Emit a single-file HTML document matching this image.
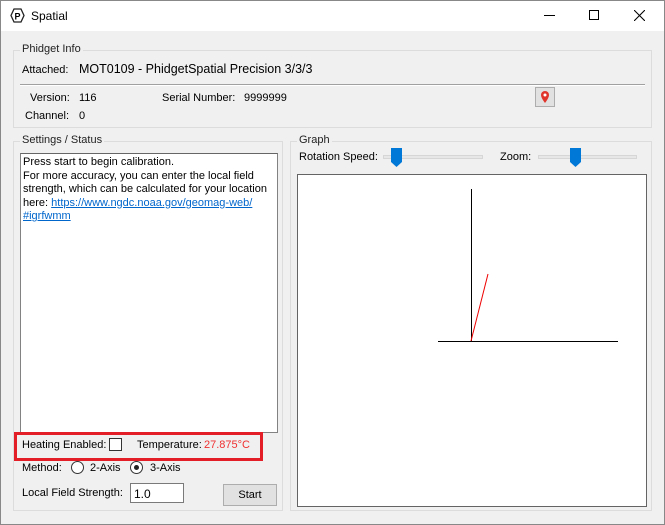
<!DOCTYPE html>
<html><head><style>
*{box-sizing:border-box;margin:0;padding:0}
body{width:665px;height:525px;overflow:hidden;background:#f0f0f0;font-family:"Liberation Sans",sans-serif;font-size:11px;color:#000;position:relative}
.a{position:absolute;white-space:nowrap}
.gb{position:absolute;border:1px solid #dcdcdc}
.gl{position:absolute;background:#f0f0f0;padding:0 2px;top:-8px;left:6px;color:#222}
</style></head><body>
<div class="a" style="left:0;top:0;width:665px;height:31px;background:#fff;border:1px solid #888;border-bottom:none"></div>
<div class="a" style="left:0;top:0;width:1px;height:525px;background:#888"></div>
<div class="a" style="left:664px;top:0;width:1px;height:525px;background:#888"></div>
<div class="a" style="left:0;top:524px;width:665px;height:1px;background:#888"></div>
<svg class="a" style="left:10px;top:8px" width="15" height="15" viewBox="0 0 15 15"><polygon points="4,1 11,1 14,7.5 11,14 4,14 1,7.5" fill="none" stroke="#222" stroke-width="1.3"/><text x="4.5" y="11.5" font-size="9" font-family="Liberation Sans" font-weight="bold">P</text></svg>
<div class="a" style="left:31px;top:9px;font-size:12px">Spatial</div>
<div class="a" style="left:544px;top:15px;width:11px;height:1px;background:#000"></div>
<div class="a" style="left:589px;top:10px;width:10px;height:10px;border:1px solid #000"></div>
<svg class="a" style="left:634px;top:10px" width="11" height="11"><path d="M0 0L11 11M11 0L0 11" stroke="#000" stroke-width="1.1"/></svg>

<div class="gb" style="left:13px;top:50px;width:639px;height:78px"><span class="gl">Phidget Info</span></div>
<div class="a" style="left:22px;top:64px">Attached:</div>
<div class="a" style="left:79px;top:62px;font-size:12.5px">MOT0109 - PhidgetSpatial Precision 3/3/3</div>
<div class="a" style="left:20px;top:84px;width:625px;height:2px;border-top:1px solid #a0a0a0;border-bottom:1px solid #fff"></div>
<div class="a" style="left:30px;top:92px">Version:</div><div class="a" style="left:79px;top:92px">116</div>
<div class="a" style="left:25px;top:110px">Channel:</div><div class="a" style="left:79px;top:110px">0</div>
<div class="a" style="left:162px;top:92px">Serial Number:</div><div class="a" style="left:244px;top:92px">9999999</div>
<div class="a" style="left:535px;top:87px;width:20px;height:20px;background:#e1e1e1;border:1px solid #adadad"></div>
<svg class="a" style="left:539px;top:90px" width="12" height="14" viewBox="0 0 12 14"><path d="M6 13C6 13 10 8 10 5A4 4 0 0 0 2 5C2 8 6 13 6 13Z" fill="#e0352b"/><circle cx="6" cy="5" r="1.5" fill="#fff"/></svg>

<div class="gb" style="left:13px;top:141px;width:270px;height:370px"><span class="gl">Settings / Status</span></div>
<div class="a" style="left:20px;top:153px;width:258px;height:280px;background:#fff;border:1px solid #828282;border-top-color:#666"></div>
<div class="a" style="left:23px;top:156px;line-height:13.5px">Press start to begin calibration.<br>For more accuracy, you can enter the local field<br>strength, which can be calculated for your location<br>here: <span style="color:#0066cc;text-decoration:underline">https://www.ngdc.noaa.gov/geomag-web/</span><br><span style="color:#0066cc;text-decoration:underline">#igrfwmm</span></div>
<div class="a" style="left:14px;top:432px;width:249px;height:29px;border:3px solid #e41e26"></div>
<div class="a" style="left:22px;top:439px">Heating Enabled:</div>
<div class="a" style="left:109px;top:438px;width:13px;height:13px;background:#fff;border:1px solid #333"></div>
<div class="a" style="left:137px;top:439px">Temperature:</div>
<div class="a" style="left:204px;top:439px;color:#f03030">27.875°C</div>
<div class="a" style="left:22px;top:462px">Method:</div>
<div class="a" style="left:71px;top:461px;width:13px;height:13px;border-radius:50%;background:#fff;border:1px solid #333"></div>
<div class="a" style="left:90px;top:462px">2-Axis</div>
<div class="a" style="left:130px;top:461px;width:13px;height:13px;border-radius:50%;background:#fff;border:1px solid #333"></div>
<div class="a" style="left:134px;top:465px;width:5px;height:5px;border-radius:50%;background:#222"></div>
<div class="a" style="left:150px;top:462px">3-Axis</div>
<div class="a" style="left:22px;top:487px">Local Field Strength:</div>
<div class="a" style="left:130px;top:483px;width:54px;height:20px;background:#fff;border:1px solid #7a7a7a;padding:3px 3px;font-size:12px">1.0</div>
<div class="a" style="left:223px;top:484px;width:54px;height:22px;background:#e1e1e1;border:1px solid #adadad;text-align:center;line-height:20px">Start</div>

<div class="gb" style="left:290px;top:141px;width:362px;height:370px"><span class="gl">Graph</span></div>
<div class="a" style="left:299px;top:151px">Rotation Speed:</div>
<div class="a" style="left:383px;top:155px;width:100px;height:4px;background:#e7e7e7;border:1px solid #d6d6d6"></div>
<svg class="a" style="left:391px;top:148px" width="12" height="20"><path d="M0 0H11V14L5.5 19L0 14Z" fill="#0078d7"/></svg>
<div class="a" style="left:500px;top:151px">Zoom:</div>
<div class="a" style="left:538px;top:155px;width:99px;height:4px;background:#e7e7e7;border:1px solid #d6d6d6"></div>
<svg class="a" style="left:570px;top:148px" width="12" height="20"><path d="M0 0H11V14L5.5 19L0 14Z" fill="#0078d7"/></svg>
<div class="a" style="left:297px;top:174px;width:350px;height:333px;background:#fff;border:1px solid #646464"></div>
<svg class="a" style="left:0;top:0" width="665" height="525"><path d="M471.5 189V341M438 341.5H618" stroke="#000" stroke-width="1"/><path d="M471 341L488 274" stroke="#e00" stroke-width="1"/></svg>
</body></html>
